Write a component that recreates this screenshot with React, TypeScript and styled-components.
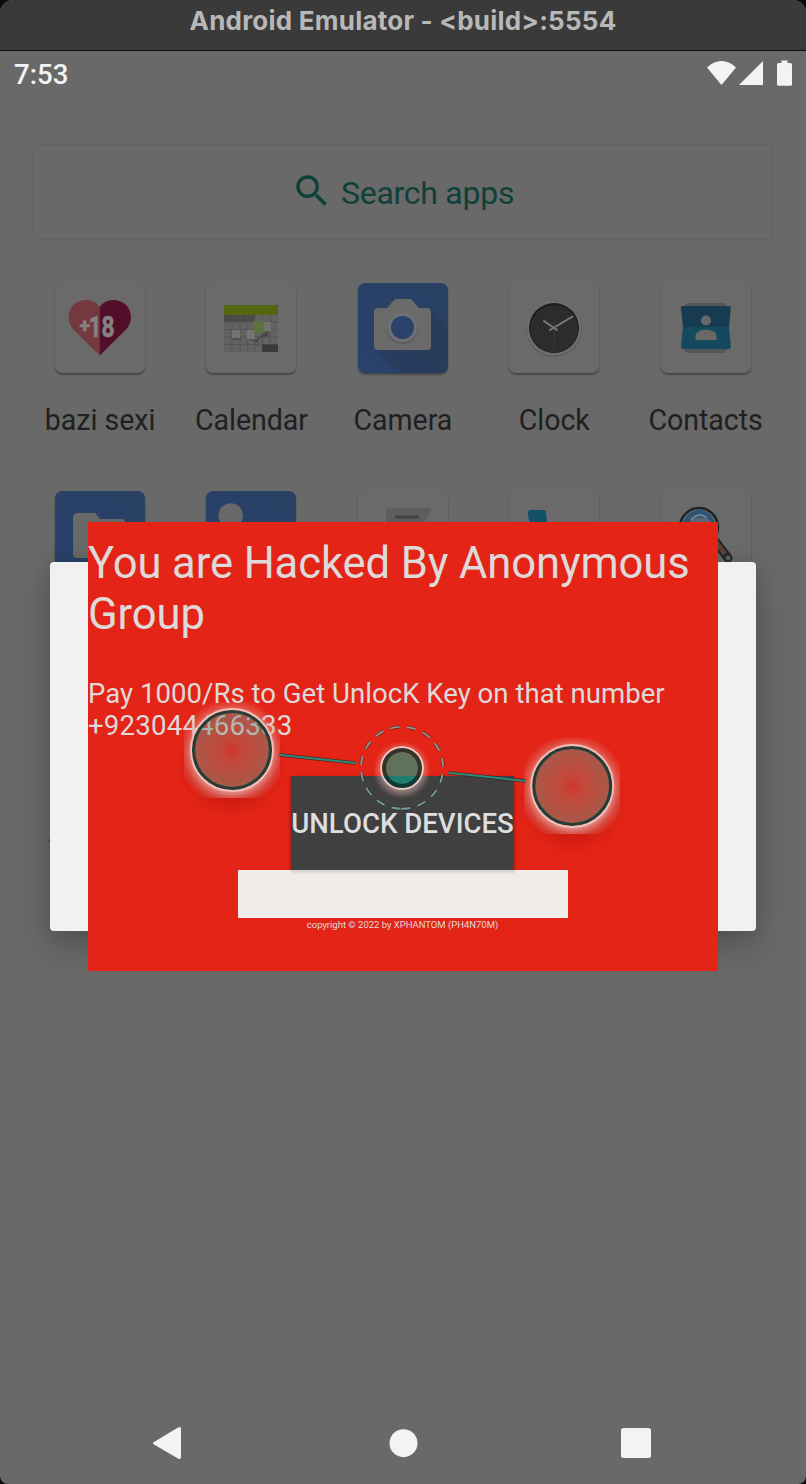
import React from "react";
import styled, { createGlobalStyle } from "styled-components";

const GlobalStyle = createGlobalStyle`
  html, body { margin: 0; padding: 0; background: #0c0c0c; }
  *, *::before, *::after { box-sizing: border-box; }
`;

const Window = styled.div`
  position: relative;
  display: flex;
  flex-direction: column;
  width: 806px;
  height: 1484px;
  overflow: hidden;
  border-radius: 13px 13px 8px 8px;
  background: #696969;
  font-family: Roboto, sans-serif;
`;

const TitleBar = styled.header`
  display: flex;
  justify-content: center;
  height: 51px;
  flex: none;
  padding-top: 4px;
  background: #3a3a3a;
  border-bottom: 1px solid #101010;
  color: #b8b8b8;
  font: 700 26px/34px Inter, sans-serif;
  letter-spacing: 0.22px;
  white-space: nowrap;
`;

const StatusBar = styled.div`
  display: flex;
  justify-content: space-between;
  align-items: flex-start;
  height: 93px;
  flex: none;
  padding: 8px 12px 0 14px;
`;

const Time = styled.span`
  color: #f3f3f3;
  font-size: 27.6px;
  font-weight: 500;
  line-height: 32px;
`;

const SearchBox = styled.div`
  display: flex;
  align-items: center;
  flex: none;
  width: 741px;
  height: 96px;
  margin-left: 32px;
  padding: 2px 0 0 258px;
  border: 1px solid #626262;
  border-radius: 5px;
  color: #10403a;
  font-size: 32px;
  letter-spacing: -0.27px;
  svg { flex: none; margin: -4px 8px 0 0; }
`;

const AppGrid = styled.main`
  display: grid;
  grid-template-columns: repeat(5, 151.4px);
  grid-auto-rows: 208px;
  padding: 43px 0 0 24.4px;
`;

const AppEntry = styled.div`
  display: flex;
  flex-direction: column;
  align-items: center;
`;

const Tile = styled.div<{ $blue?: boolean }>`
  width: 90px;
  height: 90px;
  border-radius: 7px;
  background: ${(p) => (p.$blue ? "linear-gradient(45deg, #2a416b, #294064)" : "#6a6a6a")};
  box-shadow: 0 2px 2px rgba(0, 0, 0, 0.28), 0 1px 1px rgba(0, 0, 0, 0.1);
  overflow: hidden;
  svg { display: block; }
`;

const Label = styled.span`
  margin-top: 29px;
  color: #202020;
  font-size: 28.6px;
  line-height: 36px;
  letter-spacing: -0.05px;
  white-space: nowrap;
`;

const Card = styled.section`
  position: absolute;
  left: 50px;
  top: 562px;
  width: 705.5px;
  height: 368.5px;
  border-radius: 4px;
  background: #f1f1f1;
  box-shadow: 0 16px 34px rgba(0, 0, 0, 0.2), 0 0 18px rgba(0, 0, 0, 0.1);
`;

const Panel = styled.section`
  position: absolute;
  left: 88px;
  top: 522px;
  width: 630px;
  height: 449px;
  display: flex;
  flex-direction: column;
  align-items: center;
  padding-top: 16px;
  background: #e32417;
  color: #dedada;
`;

const Heading = styled.h1`
  align-self: flex-start;
  margin: 0;
  font-size: 43.6px;
  font-weight: 400;
  line-height: 51px;
  letter-spacing: -0.11px;
`;

const Message = styled.p`
  align-self: flex-start;
  margin: 38px 0 0;
  font-size: 27.6px;
  line-height: 32px;
`;

const PhoneNumber = styled.span`
  letter-spacing: 0.2px;
`;

const UnlockButton = styled.button`
  width: 223px;
  height: 94px;
  margin: 34px 1px 0 0;
  padding: 2px 0 0;
  border: 0;
  background: #404040;
  box-shadow: 0 2px 4px rgba(0, 0, 0, 0.4);
  color: #dedede;
  font: 500 27.6px/92px Roboto, sans-serif;
  white-space: nowrap;
`;

const KeyField = styled.div`
  width: 330px;
  height: 47.5px;
  background: linear-gradient(rgba(0, 0, 0, 0.12), rgba(0, 0, 0, 0)) 53px 0 / 224px 5px no-repeat #efecea;
`;

const Copyright = styled.small`
  margin: 1.5px 1px 0 0;
  font-size: 9.5px;
  line-height: 12px;
  letter-spacing: -0.02px;
`;

const Overlay = styled.svg`
  position: absolute;
  left: 88px;
  top: 690px;
`;

const NavBar = styled.nav`
  display: flex;
  justify-content: space-between;
  align-items: center;
  height: 83px;
  margin-top: auto;
  flex: none;
  padding: 0 155px 0 152px;
`;

const EdgeMark = styled.i`
  position: absolute;
  left: 49px;
  top: 839px;
  width: 1px;
  height: 3px;
  background: #3c3c3c;
`;

const Heart = () => (
  <svg width="90" height="90">
    <path d="M44.700 72.500 18 46C8 34 16 17 31 17c6 0 11 3 13.700 7z" fill="#74393f" />
    <path d="M44.700 72.500 71.500 46C81.500 34 73.500 17 58.500 17c-6 0-11 3-13.800 7z" fill="#520f29" />
    <g fill="#858083" stroke="#858083" strokeWidth=".7" fontFamily="Roboto, sans-serif" fontWeight="700">
      <text x="24.500" y="49.500" fontSize="21" textLength="10.500" lengthAdjust="spacingAndGlyphs">+</text>
      <text x="33.500" y="53.500" fontSize="29.500" textLength="26" lengthAdjust="spacingAndGlyphs">18</text>
    </g>
  </svg>
);

const Calendar = () => (
  <svg width="90" height="90">
    <rect x="18" y="22" width="54" height="47" fill="#626262" />
    <rect x="18" y="32" width="31" height="7" fill="#4a4a4a" />
    <path d="M18 39h54M18 46.500h54M18 54h54M18 61.500h54M26 32v37M34 32v37M41.500 32v37M49 32v37M56.500 32v37M64 32v37" stroke="#545454" strokeWidth=".9" />
    <rect x="18" y="22" width="54" height="10" fill="#536610" />
    <path d="M42 56l8 1 7-6 5-3v5l-8 2-3 5z" fill="#484848" />
    <rect x="27" y="55" width="8" height="2" fill="#4c4c4c" />
    <rect x="56" y="61.500" width="16" height="7.500" fill="#3a3a3a" />
    <rect x="26" y="47" width="8" height="8" fill="#737373" />
    <rect x="41" y="47" width="8" height="9" fill="#757575" />
    <rect x="58" y="39" width="7" height="9" fill="#737373" />
    <rect x="47.500" y="38" width="10.500" height="12" fill="#5c743b" />
  </svg>
);

const Camera = () => (
  <svg width="90" height="90">
    <path d="M72 26l18 18v46H43L18 66z" fill="#273752" opacity=".5" />
    <path d="M20 25h9l7-8q1-1 3-1h12q2 0 3 1l7 8h8q4 0 4 4v34q0 4-4 4H20q-4 0-4-4V29q0-4 4-4z" fill="#6a6a6a" />
    <circle cx="44.500" cy="46.500" r="15" fill="#5c5c5c" />
    <circle cx="44.500" cy="44.500" r="14.800" fill="#707070" />
    <circle cx="44.500" cy="44.500" r="11.500" fill="#2b426c" />
  </svg>
);

const Clock = () => (
  <svg width="90" height="90">
    <circle cx="45" cy="46" r="28" fill="#5a5a60" />
    <circle cx="45" cy="45" r="27.500" fill="#6e6e71" />
    <circle cx="45" cy="45" r="25" fill="#1d1e1f" />
    <circle cx="45.200" cy="46" r="23.700" fill="#2b2c2d" />
    <path d="M45 35v31" stroke="#552e2a" strokeWidth="1.200" />
    <path d="M35 38l13 9M41 47l22.500-13.500" stroke="#7a7a7d" strokeWidth="2" strokeLinecap="round" />
  </svg>
);

const Contacts = () => (
  <svg width="90" height="90">
    <path d="M26 20h38l3 4v42l-4 4H26l-4-4V24z" fill="#565656" />
    <path d="M21 23h47q2 0 1.800 2L68 44H22L20 26q-.3-3 1-3z" fill="#173c51" />
    <path d="M22 44h46l1.800 20q0 2-2 2H22q-2 0-2-2z" fill="#15495e" />
    <circle cx="45" cy="37.500" r="5" fill="#686868" />
    <path d="M34.500 57v-5c2-7 19-7 21 0v5z" fill="#686868" />
  </svg>
);

const Files = () => (
  <svg width="90" height="90">
    <path d="M23 22h17l5 6h21q4 0 4 4v31q0 4-4 4H22q-4 0-4-4V27q0-5 5-5z" fill="#696969" />
  </svg>
);

const Gallery = () => (
  <svg width="90" height="90">
    <circle cx="24.700" cy="24.500" r="12.300" fill="#696969" />
  </svg>
);

const Messenger = () => (
  <svg width="90" height="90">
    <path d="M32 17h42L63 38v26H28V21q0-4 4-4z" fill="#5d5d5d" />
    <path d="M37 26h24" stroke="#434343" strokeWidth="3" />
  </svg>
);

const Phone = () => (
  <svg width="90" height="90">
    <path d="M19 22q0-3 2-3h14q2 0 2 2c0 4 1 8 2 12l-8 10c-8-6-12-12-12-21z" fill="#15506b" />
  </svg>
);

const Magnifier = () => (
  <svg width="90" height="90">
    <path d="M54 50l13 17" stroke="#252525" strokeWidth="9" strokeLinecap="round" />
    <path d="M54 50l10 13" stroke="#5b4234" strokeWidth="5" />
    <circle cx="67" cy="67" r="2.500" fill="#606060" />
    <circle cx="38" cy="36" r="19" fill="#5b6871" stroke="#202326" strokeWidth="2.500" />
    <path d="M22 38c0-25 31-25 32-2-6-13-24-12-32 2z" fill="#2f5270" />
    <path d="M30 29q8-9 16-2" fill="none" stroke="#6a8496" strokeWidth="2" />
  </svg>
);

const apps: { name?: string; blue?: boolean; Icon: React.FC }[] = [
  { name: "bazi sexi", Icon: Heart },
  { name: "Calendar", Icon: Calendar },
  { name: "Camera", blue: true, Icon: Camera },
  { name: "Clock", Icon: Clock },
  { name: "Contacts", Icon: Contacts },
  { blue: true, Icon: Files },
  { blue: true, Icon: Gallery },
  { Icon: Messenger },
  { Icon: Phone },
  { Icon: Magnifier },
];

const BigNode = ({ x, y }: { x: number; y: number }) => (
  <g transform={`translate(${x} ${y})`}>
    <g mask="url(#outside)">
      <circle cy="14" r="54" fill="url(#drop)" />
      <rect x="-48" y="-48" width="96" height="96" fill="url(#halo)" />
    </g>
    <circle r="39" fill="url(#touch)" />
    <circle r="38.500" fill="none" stroke="#213f36" strokeWidth="3.200" />
    <circle r="41" fill="none" stroke="#f1c0bc" strokeWidth="1.900" />
  </g>
);

const Link = ({ d }: { d: string }) => (
  <>
    <path d={d} stroke="#3a2020" strokeOpacity=".7" strokeWidth="3.600" />
    <path d={d} stroke="#1ba08f" strokeOpacity=".85" strokeWidth="2" />
  </>
);

const UnlockGesture = () => (
  <Overlay width="630" height="170" viewBox="88 690 630 170">
    <defs>
      <radialGradient id="halo" gradientUnits="userSpaceOnUse" cx="0" cy="2.500" r="55">
        <stop offset=".73" stopColor="#e6b8b0" stopOpacity=".7" />
        <stop offset=".86" stopColor="#e09890" stopOpacity=".32" />
        <stop offset="1" stopColor="#e08880" stopOpacity="0" />
      </radialGradient>
      <radialGradient id="drop">
        <stop offset=".6" stopColor="#800" stopOpacity=".22" />
        <stop offset="1" stopColor="#800" stopOpacity="0" />
      </radialGradient>
      <radialGradient id="touch">
        <stop offset="0" stopColor="#8c7078" stopOpacity=".22" />
        <stop offset=".25" stopColor="#849080" stopOpacity=".32" />
        <stop offset="1" stopColor="#708878" stopOpacity=".54" />
      </radialGradient>
      <radialGradient id="glow">
        <stop offset=".66" stopColor="#e8c8c4" stopOpacity=".55" />
        <stop offset="1" stopColor="#e8a8a4" stopOpacity="0" />
      </radialGradient>
      <mask id="outside" maskUnits="userSpaceOnUse" x="-60" y="-60" width="120" height="140">
        <rect x="-60" y="-60" width="120" height="140" fill="#fff" />
        <circle r="41" fill="#000" />
      </mask>
      <mask id="ring" maskUnits="userSpaceOnUse" x="350" y="710" width="110" height="120">
        <rect x="350" y="710" width="110" height="120" fill="#fff" />
        <circle cx="402" cy="768" r="21" fill="#000" />
      </mask>
    </defs>
    <BigNode x={232} y={750} />
    <BigNode x={572.2} y={786} />
    <Link d="M279 754.700L355.500 763" />
    <Link d="M448.500 772.800L525.500 781" />
    <g fill="none" strokeDasharray="9 7.500" transform="rotate(92 402 767.800)">
      <circle cx="402" cy="767.800" r="41" stroke="#1c1c1c" strokeOpacity=".5" strokeWidth="3.400" />
      <circle cx="402" cy="767.800" r="41" stroke="#8fc9c0" strokeOpacity=".7" strokeWidth="1.900" />
    </g>
    <circle cx="402" cy="770" r="29" fill="url(#glow)" mask="url(#ring)" />
    <circle cx="402" cy="768" r="16" fill="#09a68b" fillOpacity=".6" />
    <circle cx="402" cy="768" r="18" fill="none" stroke="#00382f" strokeOpacity=".78" strokeWidth="4.200" />
    <circle cx="402" cy="768" r="20.900" fill="none" stroke="#f0cccb" strokeWidth="1.800" />
  </Overlay>
);

export default function App() {
  return (
    <>
      <GlobalStyle />
      <Window>
        <TitleBar>Android Emulator - &lt;build&gt;:5554</TitleBar>
        <StatusBar>
          <Time>7:53</Time>
          <svg width="88" height="30" fill="#f3f3f3">
            <path d="M1 8.500C9 -.3 22-.3 30 8.500L15.500 26z" />
            <path d="M33 26L57 2v24z" />
            <path d="M75.500 1.500h6V4h3q1.500 0 1.500 1.500v19.800q0 1.500-1.500 1.500h-12q-1.500 0-1.500-1.500V5.500Q71 4 72.500 4h3z" />
          </svg>
        </StatusBar>
        <SearchBox>
          <svg width="42" height="42" viewBox="0 0 24 24" fill="#10403a">
            <path d="M15.500 14h-.79l-.28-.27A6.471 6.471 0 0 0 16 9.500 6.500 6.500 0 1 0 9.500 16c1.610 0 3.090-.59 4.230-1.570l.27.28v.79l5 4.990L20.490 19l-4.990-5zm-6 0C7.010 14 5 11.990 5 9.500S7.010 5 9.500 5 14 7.010 14 9.500 11.990 14 9.500 14z" />
          </svg>
          Search apps
        </SearchBox>
        <AppGrid>
          {apps.map(({ name, blue, Icon }, i) => (
            <AppEntry key={i}>
              <Tile $blue={blue}>
                <Icon />
              </Tile>
              {name && <Label>{name}</Label>}
            </AppEntry>
          ))}
        </AppGrid>
        <NavBar>
          <svg width="30" height="34" fill="#f3f3f3">
            <path d="M2 16L26 1.500Q29 0 29 3v28q0 3-3 1.500L2 18.500Q0 17.200 2 16z" />
          </svg>
          <svg width="32" height="32" fill="#f3f3f3">
            <circle cx="17.500" cy="16.200" r="14" />
          </svg>
          <svg width="30" height="32" fill="#f3f3f3">
            <rect y="1" width="30" height="30" rx="2.500" />
          </svg>
        </NavBar>
        <EdgeMark />
        <Card />
        <Panel>
          <Heading>
            You are Hacked By Anonymous
            <br />
            Group
          </Heading>
          <Message>
            Pay 1000/Rs to Get UnlocK Key on that number
            <br />
            <PhoneNumber>+923044466333</PhoneNumber>
          </Message>
          <UnlockButton>UNLOCK DEVICES</UnlockButton>
          <KeyField />
          <Copyright>copyright © 2022 by XPHANTOM (PH4N70M)</Copyright>
        </Panel>
        <UnlockGesture />
      </Window>
    </>
  );
}
